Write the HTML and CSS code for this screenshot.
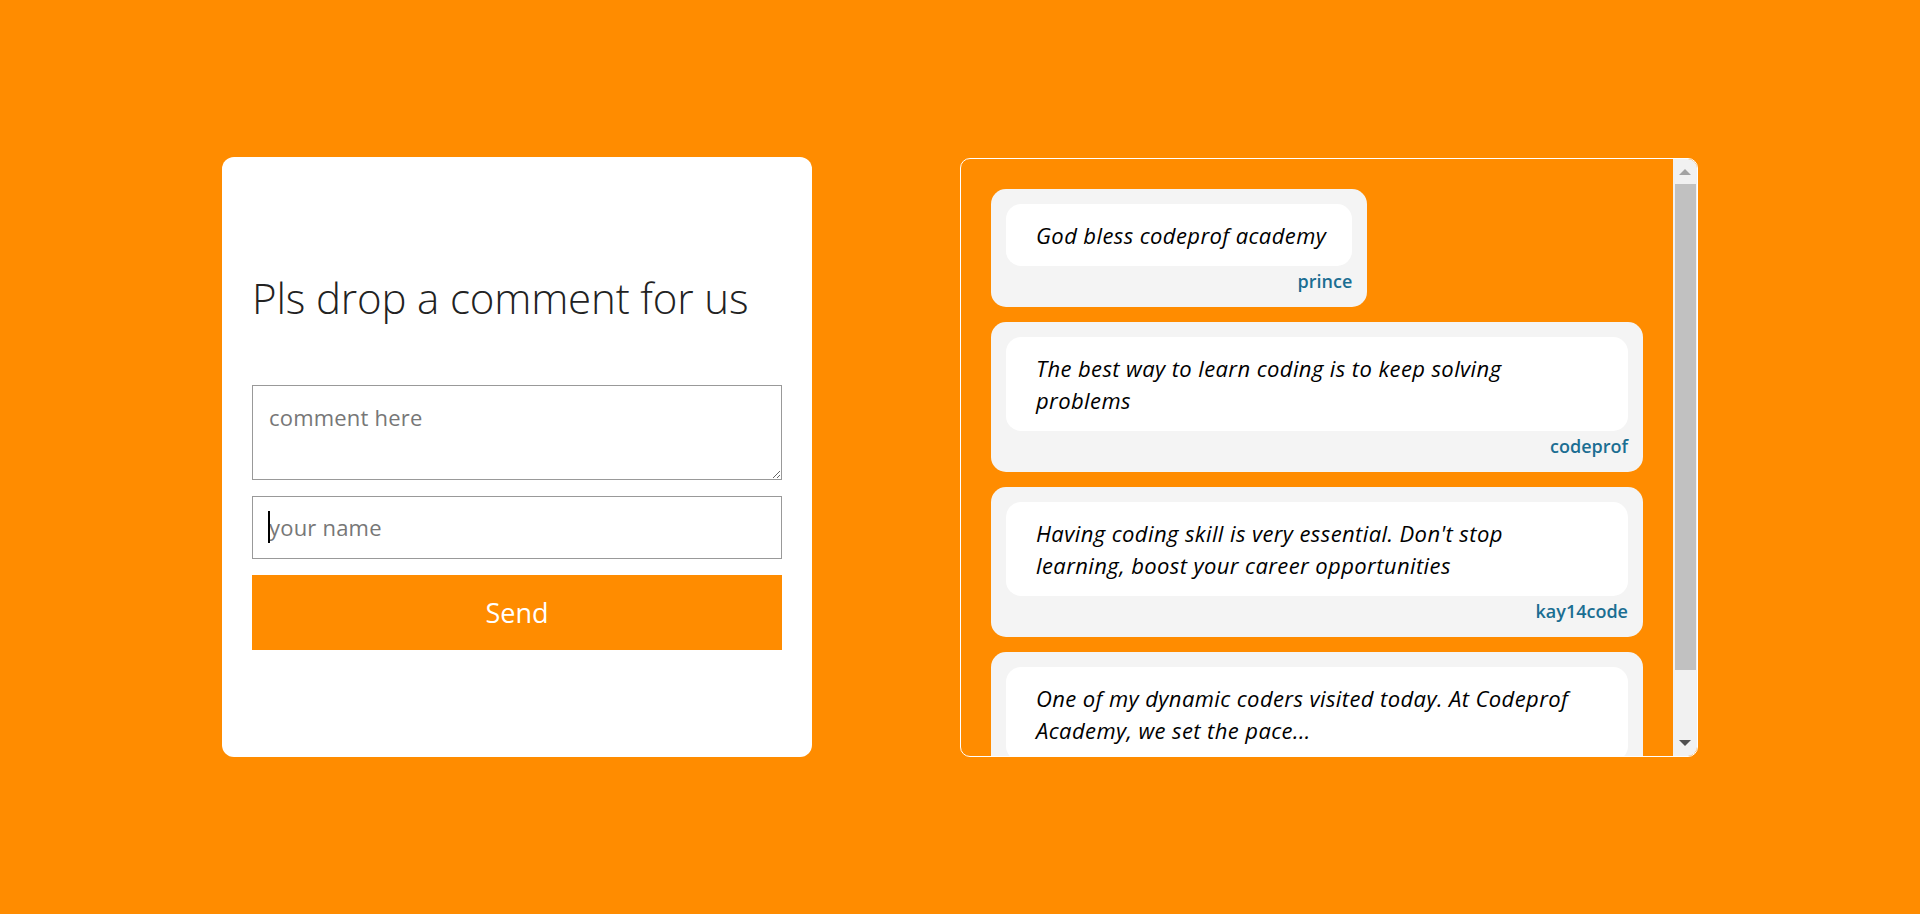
FILE: index.html
```html
<!DOCTYPE html>
<html lang="en">
<head>
<meta charset="utf-8">
<title>Comments</title>
<link rel="stylesheet" href="styles.css">
</head>
<body>
<main class="page">
  <section class="form-card">
    <h1 class="form-title">Pls drop a comment for us</h1>
    <form class="form">
      <textarea class="field field-area" placeholder="comment here"></textarea>
      <div class="line-wrap">
        <span class="caret"></span>
        <input class="field field-line" type="text" placeholder="your name">
      </div>
      <button class="send" type="button">Send</button>
    </form>
  </section>
  <section class="comments-panel">
    <div class="comments">
      <article class="comment">
        <p class="comment-text">God bless codeprof academy</p>
        <p class="comment-name">prince</p>
      </article>
      <article class="comment">
        <p class="comment-text">The best way to learn coding is to keep solving problems</p>
        <p class="comment-name">codeprof</p>
      </article>
      <article class="comment">
        <p class="comment-text">Having coding skill is very essential. Don't stop learning,&nbsp;boost your career opportunities</p>
        <p class="comment-name">kay14code</p>
      </article>
      <article class="comment">
        <p class="comment-text">One of my dynamic coders visited today. At Codeprof Academy, we set the pace...</p>
        <p class="comment-name">codeprof</p>
      </article>
    </div>
    <div class="scrollbar">
      <div class="sb-btn"><span class="arrow arrow-up"></span></div>
      <div class="sb-track"><div class="sb-thumb"></div></div>
      <div class="sb-btn"><span class="arrow arrow-down"></span></div>
    </div>
  </section>
</main>
</body>
</html>
```
FILE: styles.css
```css
* { box-sizing: border-box; }
html, body { margin: 0; padding: 0; }
body {
  background: #ff8c00;
  font-family: "Open Sans", "Noto Sans", sans-serif;
}
.page {
  height: 914px;
  display: flex;
  align-items: center;
  justify-content: center;
  gap: 148px;
}
.form-card {
  width: 590px;
  height: 600px;
  background: #fff;
  border-radius: 12px;
  padding: 0 30px;
  display: flex;
  flex-direction: column;
  justify-content: center;
}
.form-title {
  margin: 0 0 56px;
  padding-top: 2px;
  font-size: 42px;
  line-height: 62px;
  font-weight: 300;
  letter-spacing: -0.15px;
  color: #222;
  white-space: nowrap;
}
.form {
  display: flex;
  flex-direction: column;
  gap: 16px;
}
.field {
  width: 100%;
  border: 1px solid #999;
  border-radius: 0;
  font-family: "Open Sans", "Noto Sans", sans-serif;
  font-size: 22px;
  letter-spacing: 0.2px;
  color: #222;
  background: #fff;
  padding: 0 14px 0 16px;
  margin: 0;
  outline: none;
}
.field::placeholder { color: #777; }
.field-area {
  height: 95px;
  padding-top: 16px;
  line-height: 30px;
  resize: vertical;
  display: block;
}
.line-wrap {
  position: relative;
}
.caret {
  position: absolute;
  left: 16px;
  top: 15px;
  width: 2px;
  height: 32px;
  background: #000;
}
.field-line {
  height: 63px;
  display: block;
}
.send {
  height: 75px;
  border: none;
  background: #ff8c00;
  color: #fff;
  font-family: "Open Sans", "Noto Sans", sans-serif;
  font-size: 27px;
  cursor: pointer;
}
.comments-panel {
  width: 738px;
  height: 599px;
  border: 1px solid #fff;
  border-radius: 10px;
  overflow: hidden;
  display: flex;
}
.comments {
  flex: 1;
  min-width: 0;
  padding: 30px;
  overflow: hidden;
  display: flex;
  flex-direction: column;
  align-items: flex-start;
  gap: 15px;
}
.scrollbar {
  width: 24px;
  flex: none;
  background: #f1f1f1;
  display: flex;
  flex-direction: column;
}
.sb-btn {
  height: 24px;
  flex: none;
  display: flex;
  align-items: center;
  justify-content: center;
}
.arrow {
  width: 0;
  height: 0;
  border-left: 6px solid transparent;
  border-right: 6px solid transparent;
}
.arrow-up {
  border-bottom: 6px solid #a3a3a3;
  margin-top: 2px;
}
.arrow-down {
  border-top: 6px solid #505050;
  margin-bottom: 2px;
}
.sb-track {
  flex: 1;
  padding: 1px 1px 0 2px;
}
.sb-thumb {
  height: 486px;
  background: #c1c1c1;
}
.comment {
  flex: none;
  max-width: 100%;
  background: #f4f4f4;
  border-radius: 15px;
  padding: 15px 15px 14px;
  margin: 0;
}
.comment-text {
  margin: 0;
  background: #fff;
  border-radius: 15px;
  padding: 15px 26px 15px 30px;
  font-size: 22px;
  letter-spacing: 0.4px;
  line-height: 32px;
  font-style: italic;
  color: #000;
}
.comment-name {
  margin: 3px 0 0;
  text-align: right;
  font-size: 18px;
  line-height: 24px;
  font-weight: 600;
  color: #1b6e92;
}
```
